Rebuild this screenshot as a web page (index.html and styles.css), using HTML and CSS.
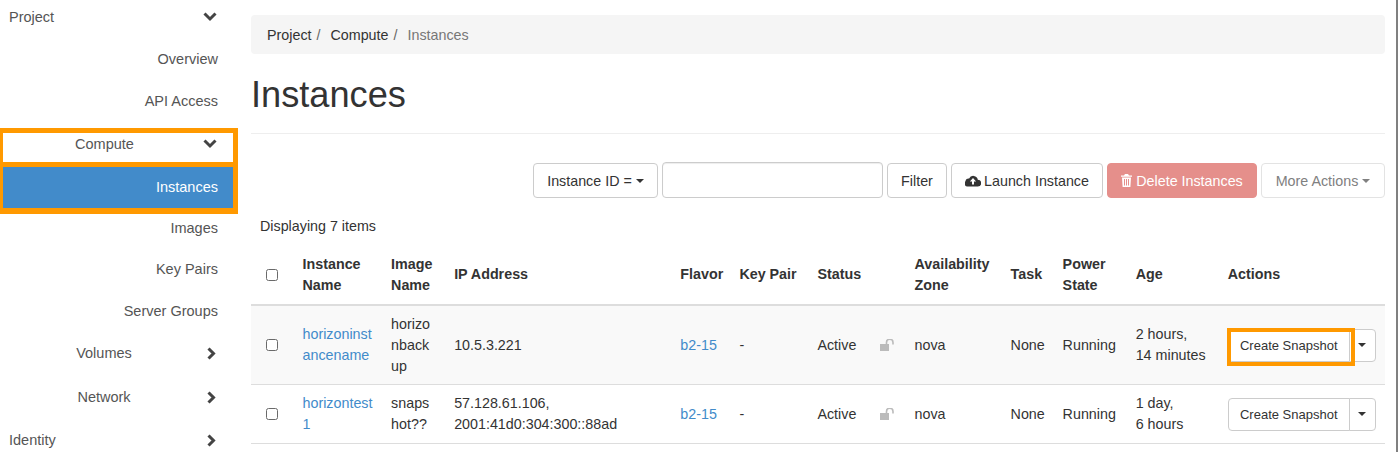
FILE: index.html
```html
<!DOCTYPE html>
<html lang="en">
<head>
<meta charset="utf-8">
<title>Instances</title>
<link rel="stylesheet" href="styles.css">
</head>
<body>
<div class="page">
  <nav class="side">
    <div class="nav-row top first"><span class="lbl-top">Project</span><svg class="chev" viewBox="0 0 14 10"><path d="M1.500 1.500 7 7l5.500-5.500"/></svg></div>
    <a class="nav-leaf">Overview</a>
    <a class="nav-leaf">API Access</a>
    <div class="hl-group">
      <div class="nav-row compute"><span class="lbl-sub">Compute</span><svg class="chev" viewBox="0 0 14 10"><path d="M1.500 1.500 7 7l5.500-5.500"/></svg></div>
      <a class="active">Instances</a>
    </div>
    <a class="nav-leaf">Images</a>
    <a class="nav-leaf up1">Key Pairs</a>
    <a class="nav-leaf">Server Groups</a>
    <div class="nav-row"><span class="lbl-sub">Volumes</span><svg class="chev right" viewBox="0 0 9 13"><path d="M1.500 1.500 6.500 6.500l-5 5"/></svg></div>
    <div class="nav-row down2"><span class="lbl-sub">Network</span><svg class="chev right" viewBox="0 0 9 13"><path d="M1.500 1.500 6.500 6.500l-5 5"/></svg></div>
    <div class="nav-row down1"><span class="lbl-top">Identity</span><svg class="chev right" viewBox="0 0 9 13"><path d="M1.500 1.500 6.500 6.500l-5 5"/></svg></div>
  </nav>
  <main class="main">
    <div class="crumbs"><span>Project</span><i>/</i><span>Compute</span><i>/</i><span class="cur">Instances</span></div>
    <h1 class="title">Instances</h1>
    <div class="toolbar">
      <button class="btn sel">Instance ID = <b class="caret"></b></button>
      <input class="search" type="text" aria-label="Filter">
      <button class="btn filter">Filter</button>
      <button class="btn launch"><svg class="ico" viewBox="0 0 16 12"><path fill="#333" d="M12.800 4.700A4.600 4.600 0 0 0 4.100 3.500 3 3 0 0 0 0.500 6.300 3 3 0 0 0 3 11.500h9.800a3.400 3.400 0 0 0 0-6.800z"/><path fill="#fff" d="M8 3 4.900 6.400H7V9.500H9V6.400H11.100z"/></svg>Launch Instance</button>
      <button class="btn danger"><svg class="ico trash" viewBox="0 0 11 13"><path fill="#fff" fill-rule="evenodd" d="M4 0h3l1 1.500h3v1.200H0V1.500h3zM1 3.500h9l-.6 9.500H1.600zM3 5v6.500h1V5zm2 0v6.500h1V5zm2 0v6.500h1V5z"/></svg>Delete Instances</button>
      <button class="btn more">More Actions <b class="caret"></b></button>
    </div>
    <div class="count">Displaying 7 items</div>
    <table class="grid">
      <thead>
        <tr>
          <th class="c-check"><span class="check"></span></th>
          <th class="c-name">Instance Name</th>
          <th class="c-img">Image Name</th>
          <th class="c-ip">IP Address</th>
          <th class="c-fl">Flavor</th>
          <th class="c-kp">Key Pair</th>
          <th class="c-st">Status</th>
          <th class="c-lock"></th>
          <th class="c-az">Availability Zone</th>
          <th class="c-task">Task</th>
          <th class="c-pw">Power State</th>
          <th class="c-age">Age</th>
          <th class="c-act">Actions</th>
        </tr>
      </thead>
      <tbody>
        <tr class="odd">
          <td class="c-check"><span class="check"></span></td>
          <td class="c-name"><a class="link">horizoninst<br>ancename</a></td>
          <td>horizo<br>nback<br>up</td>
          <td>10.5.3.221</td>
          <td><a class="link">b2-15</a></td>
          <td>-</td>
          <td>Active</td>
          <td><svg class="lock" viewBox="0 0 15 12"><rect x="0" y="5" width="9" height="7" fill="#bbb"/><path d="M6.500 5V3.500a3 3 0 0 1 6.500 0V5.500" fill="none" stroke="#bbb" stroke-width="1.600"/></svg></td>
          <td>nova</td>
          <td>None</td>
          <td>Running</td>
          <td>2 hours,<br>14 minutes</td>
          <td><div class="split"><button class="btn snap marked">Create Snapshot</button><button class="btn tog"><b class="caret"></b></button></div></td>
        </tr>
        <tr>
          <td class="c-check"><span class="check"></span></td>
          <td class="c-name"><a class="link">horizontest<br>1</a></td>
          <td>snaps<br>hot??</td>
          <td>57.128.61.106,<br>2001:41d0:304:300::88ad</td>
          <td><a class="link">b2-15</a></td>
          <td>-</td>
          <td>Active</td>
          <td><svg class="lock" viewBox="0 0 15 12"><rect x="0" y="5" width="9" height="7" fill="#bbb"/><path d="M6.500 5V3.500a3 3 0 0 1 6.500 0V5.500" fill="none" stroke="#bbb" stroke-width="1.600"/></svg></td>
          <td>nova</td>
          <td>None</td>
          <td>Running</td>
          <td>1 day,<br>6 hours</td>
          <td><div class="split"><button class="btn snap">Create Snapshot</button><button class="btn tog"><b class="caret"></b></button></div></td>
        </tr>
      </tbody>
    </table>
  </main>
</div>
</body>
</html>
```
FILE: styles.css
```css
* { box-sizing: border-box; }
html, body { margin: 0; height: 452px; overflow: hidden; background: #fff; }
body {
  font-family: "Liberation Sans", Arial, sans-serif;
  font-size: 14.3px;
  line-height: 20px;
  color: #333;
}
.page { display: flex; width: 1398px; height: 452px; border-right: 2px solid #808080; }

/* sidebar */
.side { width: 251px; flex: none; color: #555; font-size: 14.5px; }
.nav-row { display: flex; align-items: center; height: 42px; }
.first { height: 38px; padding-bottom: 4px; }
.nav-leaf { display: block; height: 42px; line-height: 42px; text-align: right; padding-right: 33px; }
.lbl-top { flex: none; width: 208px; padding-left: 9px; }
.lbl-sub { flex: none; width: 208px; text-align: center; }
.chev { flex: none; width: 14px; height: 10px; margin-left: -5px; fill: none; stroke: #444; stroke-width: 3; }
.chev.right { width: 9px; height: 13px; margin-left: -1px; }
.hl-group { width: 238px; height: 86px; margin: 6px 0 -7px; padding: 5px 5px 6px 3px; background: #f90; display: flex; flex-direction: column; gap: 5px; }
.compute { flex: none; height: 29px; padding-bottom: 7px; background: #fff; }
.compute .lbl-sub { width: 203px; }
.compute .chev { margin-left: -3px; }
.active { flex: none; height: 41px; line-height: 41px; background: #428bca; color: #fff; text-align: right; padding-right: 15px; }
.up1 { margin-top: -1px; }
.down2 { margin-top: 2px; }
.down1 { margin-top: 1px; }

/* main */
.main { flex: none; width: 1134px; }
.crumbs { margin-top: 15px; height: 39px; background: #f5f5f5; border-radius: 4px; padding: 10px 16px; display: flex; }
.crumbs i { font-style: normal; color: #666; padding: 0 10px 0 5px; }
.crumbs .cur { color: #777; }
.title { font-size: 36.200px; line-height: 40px; font-weight: 400; margin: 21px 0 0; height: 59px; padding-bottom: 18px; border-bottom: 1px solid #eee; color: #333; }
.toolbar { display: flex; justify-content: flex-end; gap: 4px; margin-top: 29px; }
.btn { font: inherit; color: #333; background: #fff; border: 1px solid #ccc; border-radius: 4px; height: 35px; padding: 0; display: inline-flex; align-items: center; justify-content: center; white-space: nowrap; }
.sel { width: 125px; }
.sel .caret { margin-left: 4px; }
.search { width: 221px; height: 36px; margin-top: -1px; border: 1px solid #ccc; border-radius: 4px; box-shadow: inset 0 1px 1px rgba(0,0,0,.075); padding: 0; }
.filter { width: 60px; }
.launch { width: 152px; }
.danger { width: 150px; background: #e58f8b; border-color: #e58f8b; color: #fff; }
.more { width: 124px; color: #808080; border-color: #e3e3e3; }
.caret { display: inline-block; width: 0; height: 0; border-left: 4px solid transparent; border-right: 4px solid transparent; border-top: 4px solid currentColor; }
.more .caret { margin-left: 4px; }
.ico { width: 16px; height: 12px; margin-right: 3px; }
.trash { width: 11px; height: 13px; margin-right: 4px; }
.count { margin: 18px 0 0 9px; height: 20px; }
.grid { width: 100%; border-collapse: collapse; table-layout: fixed; margin-top: 10px; }
.grid th { text-align: left; font-weight: 700; padding: 8px 8px 9px; vertical-align: middle; border-bottom: 2px solid #ddd; line-height: 20.500px; }
.grid td { padding: 8px; vertical-align: middle; border-bottom: 1px solid #ddd; line-height: 21px; }
.grid .odd td { padding-top: 7.500px; padding-bottom: 7.500px; background: #f9f9f9; }
.link { color: #428bca; }
.grid .c-check { width: 44px; padding: 0 0 0 15px; }
.grid .c-name { width: 88px; padding-left: 7.500px; }
.c-img { width: 63px; }
.c-ip { width: 226px; }
.c-fl { width: 59px; }
.c-kp { width: 78px; }
.c-st { width: 63px; }
.c-lock { width: 34px; }
.c-az { width: 96px; }
.c-task { width: 52px; }
.c-pw { width: 73px; }
.c-age { width: 92px; }
.c-act { width: 165px; }
.check { display: block; width: 12px; height: 12px; border: 1.500px solid #6a6a6a; border-radius: 2.500px; background: #fff; }
.lock { width: 15px; height: 12px; display: block; }
.split { display: flex; width: 149px; }
.snap { height: 33px; width: 122px; font-size: 13px; border-radius: 4px 0 0 4px; }
.tog { height: 33px; width: 27px; margin-left: -1px; border-radius: 0 4px 4px 0; }
.marked { position: relative; z-index: 1; }
.marked::after { content: ""; position: absolute; left: -2px; right: -6px; top: -2px; bottom: -5px; border: 4px solid #f90; }
```
